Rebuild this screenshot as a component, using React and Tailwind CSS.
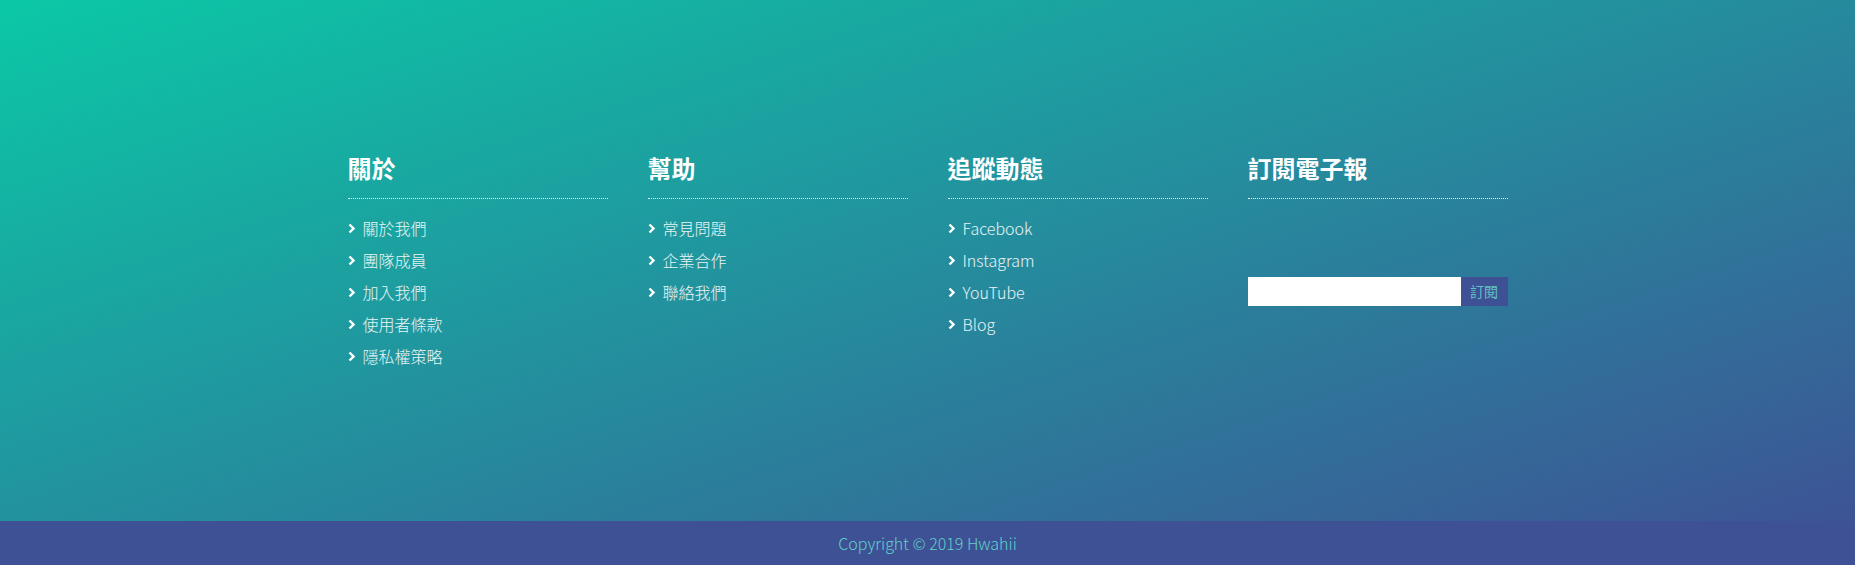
import React from "react";

const Chevron = () => (
  <svg width="8" height="11" viewBox="0 0 8 11" className="shrink-0">
    <path d="M1.5 1.5 L5.5 5.5 L1.5 9.5" fill="none" stroke="#ffffff" strokeWidth="2.4" strokeLinecap="butt" strokeLinejoin="miter" />
  </svg>
);

const Column = ({ title, items, children }) => (
  <div className="w-1/4 px-5">
    <h3 className="text-[24px] leading-[36px] font-bold text-white pb-[12px] border-b border-dotted border-white">
      {title}
    </h3>
    {items && (
      <ul className="mt-[13px]">
        {items.map((it) => (
          <li key={it} className="h-8 flex items-center gap-[7px] text-[16px] font-light text-white/90">
            <Chevron />
            <span>{it}</span>
          </li>
        ))}
      </ul>
    )}
    {children}
  </div>
);

export default function App() {
  return (
    <div className="w-full" style={{ fontFamily: '"Noto Sans CJK TC", "Noto Sans", sans-serif' }}>
      <div className="h-[521px] bg-[linear-gradient(162deg,#0bc8a6,#3d5495)] pt-[150px]">
        <div className="w-[1200px] mx-auto flex">
          <Column title="關於" items={["關於我們", "團隊成員", "加入我們", "使用者條款", "隱私權策略"]} />
          <Column title="幫助" items={["常見問題", "企業合作", "聯絡我們"]} />
          <Column title="追蹤動態" items={["Facebook", "Instagram", "YouTube", "Blog"]} />
          <Column title="訂閱電子報">
            <div className="mt-[78px] flex h-[29px]">
              <input type="text" className="w-[213px] h-full bg-white outline-none border-0 px-2" />
              <button className="flex-1 h-full bg-[#3e5194] text-[#5ec4c4] text-[14px] flex items-center justify-center">
                訂閱
              </button>
            </div>
          </Column>
        </div>
      </div>
      <div className="h-[44px] bg-[#3e5194] flex items-center justify-center text-[16px] font-light text-[#5ed1cc]">
        Copyright © 2019 Hwahii
      </div>
    </div>
  );
}
